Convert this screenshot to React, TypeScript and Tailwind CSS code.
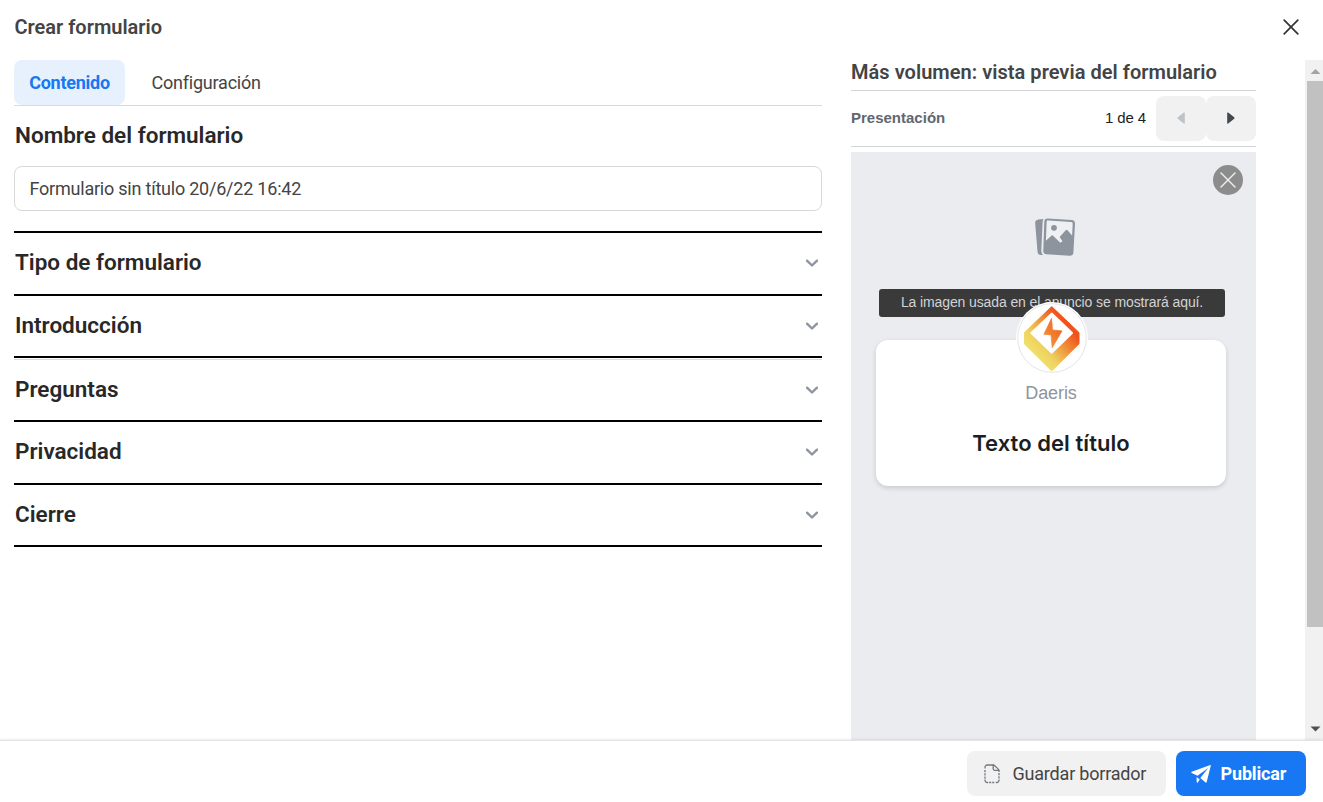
import React from "react";

const sections = [
  { title: "Tipo de formulario", box: "h-[63px] pb-px" },
  { title: "Introducción", box: "h-[62px]" },
  { title: "Preguntas", box: "h-[64px] pt-px shadow-[inset_0_1px_0_#fff,inset_0_2px_0_#dadada]" },
  { title: "Privacidad", box: "h-[63px] pb-px" },
  { title: "Cierre", box: "h-[62px]" },
];

function Chevron() {
  return (
    <svg className="mr-1 h-3 w-3" viewBox="0 0 12 12" fill="none" stroke="#8d949e" strokeWidth="2.4" strokeLinecap="round" strokeLinejoin="round">
      <path d="M1 3.700 6 8.500l5-4.800" />
    </svg>
  );
}

function PhotosIcon() {
  return (
    <svg className="h-[40px] w-[42px]" viewBox="0 0 42 40" fill="#8d949e">
      <path d="M7.2 2.2 4.4 2.5A3.6 3.6 0 0 0 1.200 6.400L3.500 34.500A3.800 3.800 0 0 0 7.400 38L9 37.900A5 5 0 0 1 7.300 33.500L8.600 5Q8.700 3.300 9.600 2.100Z" />
      <path d="M13.800 1.400 37.500 3A3.700 3.700 0 0 1 41 7L39.400 35.400A3.700 3.700 0 0 1 35.400 38.800L12.500 37.300A3.500 3.500 0 0 1 9.300 33.500L10.300 4.600A3.400 3.400 0 0 1 13.800 1.400Z" />
      <path fill="#eef0f3" d="M14.700 3.400 37.100 4.900A1.700 1.700 0 0 1 38.700 6.800L38.100 18.400 33.700 13.400A1.500 1.500 0 0 0 31.500 13.400L25.600 20 28.500 24.200 26.300 25.800 19.300 18.900A1.500 1.500 0 0 0 17.100 18.900L11.900 23.700 12.600 5.100A1.700 1.700 0 0 1 14.700 3.400Z" />
      <circle cx="20" cy="10.800" r="2.900" />
    </svg>
  );
}

function BrandLogo() {
  return (
    <svg className="h-[72px] w-[72px]" viewBox="0 0 72 72">
      <defs>
        <linearGradient id="brand" gradientUnits="userSpaceOnUse" x1="17" y1="50" x2="50" y2="22">
          <stop offset="0" stopColor="#efdf68" />
          <stop offset="0.25" stopColor="#efd160" />
          <stop offset="0.55" stopColor="#ef9f42" />
          <stop offset="1" stopColor="#f0541c" />
        </linearGradient>
        <linearGradient id="bolt" gradientUnits="userSpaceOnUse" x1="26" y1="40" x2="48" y2="25">
          <stop offset="0" stopColor="#f19a40" />
          <stop offset="1" stopColor="#f0601f" />
        </linearGradient>
      </defs>
      <circle cx="36" cy="36" r="36" fill="#fff" />
      <circle cx="36" cy="36" r="34.300" fill="#fff" stroke="#e4e5e8" strokeWidth="1" />
      <path d="M35.200 5Q35.700 4.500 36.200 5L63 30.500V41.800L36.400 68.300Q35.700 69 35 68.300L8.500 42V30.500Z" fill="url(#brand)" stroke="url(#brand)" strokeWidth="1" strokeLinejoin="round" />
      <path d="M35 11Q35.800 10.200 36.600 11L56.700 30.200Q57.500 31 56.700 31.800L36.500 51.200Q35.700 52 34.900 51.200L14.700 31.800Q14 31 14.700 30.200Z" fill="#fff" />
      <path d="M35.500 16.500 27.800 32.300 35 32.900 36.200 45.800 46 28.900 36.500 27.900Z" fill="url(#bolt)" stroke="url(#bolt)" strokeWidth="0.700" strokeLinejoin="round" />
    </svg>
  );
}

function DraftIcon() {
  return (
    <svg className="h-[20px] w-[16px]" viewBox="0 0 16 20" fill="none" stroke="#737880" strokeWidth="1.300">
      <path d="M9.500 1H3.200A2.200 2.200 0 0 0 1 3.200V4.500" />
      <path d="M1 6v9" strokeDasharray="2.300 0.900" />
      <path d="M1 15.500v.8A2.200 2.200 0 0 0 3.200 18.500h1" />
      <path d="M5.200 18.500h6" strokeDasharray="2 1" />
      <path d="M11.800 18.500h1A2.200 2.200 0 0 0 15 16.300v-.8" />
      <path d="M15 14.500V7" strokeDasharray="2.300 0.900" />
      <path d="M9.200 1v3.800A1.500 1.500 0 0 0 10.700 6.300H15Q14.700 5.500 13.800 4.600L11.300 2.200Q10.400 1.200 9.200 1Z" />
    </svg>
  );
}

export default function App() {
  return (
    <div className="flex h-[802px] w-[1323px] flex-col overflow-hidden bg-white font-['Roboto',sans-serif] text-[#1c1e21]">
      <header className="flex h-[60px] shrink-0 items-start justify-between pl-[14.500px] pr-6 pt-[15px]">
        <h1 className="text-[20px] font-semibold leading-6 text-[#444444]">Crear formulario</h1>
        <svg className="mt-1 h-4 w-4" viewBox="0 0 16 16" stroke="#333" strokeWidth="1.700" strokeLinecap="round">
          <path d="M1.200 1.200 14.800 14.800M14.800 1.200 1.200 14.800" />
        </svg>
      </header>

      <div className="flex h-[680px] shrink-0">
        <main className="ml-[14px] w-[808px]">
          <nav className="flex h-[46px] items-start border-b border-[#dadada]">
            <button className="h-[45px] w-[111px] rounded-lg bg-[#e7f1fe] text-[18px] font-bold tracking-[-0.250px] text-[#1877f2]">Contenido</button>
            <button className="ml-[26.500px] h-[45px] text-[18px] font-normal tracking-[-0.220px] text-[#444]">Configuración</button>
          </nav>
          <h2 className="mt-[15px] h-7 pl-px text-[22.500px] font-semibold leading-7 text-[#282828]">Nombre del formulario</h2>
          <div className="mt-[17px] flex h-[45px] items-center rounded-lg border border-[#d8d8d8] pl-[14.500px] text-[18px] font-normal tracking-[-0.220px] text-[#444]">
            Formulario sin título 20/6/22 16:42
          </div>
          <div className="mt-5 border-t-2 border-black">
            {sections.map((s) => (
              <div key={s.title} className={"flex items-center justify-between border-b-2 border-black pl-px " + s.box}>
                <h2 className="pb-[2px] text-[22.500px] font-semibold leading-7 text-[#282828]">{s.title}</h2>
                <Chevron />
              </div>
            ))}
          </div>
        </main>

        <aside className="ml-[29px] flex w-[405px] flex-col">
          <h2 className="h-[31px] border-b border-[#d4d5d7] text-[20px] font-semibold leading-6 tracking-[0.035px] text-[#444444]">
            Más volumen: vista previa del formulario
          </h2>
          <div className="flex h-14 items-center border-b border-[#d4d5d7] font-['Liberation_Sans',sans-serif] text-[15px]">
            <span className="font-bold text-[#606770]">Presentación</span>
            <span className="ml-auto mr-[10px] tracking-[-0.100px]">1 de 4</span>
            <button className="flex h-[45px] w-[50px] items-center justify-center rounded-lg bg-[#f1f1f1] pb-px">
              <svg className="h-3 w-2" viewBox="0 0 8 12" fill="#bec3c9"><path d="M7.800 1v10Q7.800 12 6.800 11.400L.8 6.700Q.1 6 .8 5.300L6.800.6Q7.800 0 7.800 1Z" /></svg>
            </button>
            <button className="flex h-[45px] w-[50px] items-center justify-center rounded-lg bg-[#f1f1f1] pb-px">
              <svg className="h-3 w-2" viewBox="0 0 8 12" fill="#444950"><path d="M.2 1v10Q.2 12 1.200 11.400L7.200 6.700Q7.900 6 7.200 5.300L1.200.6Q.2 0 .2 1Z" /></svg>
            </button>
          </div>
          <div className="mt-[5px] flex grow flex-col bg-[#ebecf0] font-['Liberation_Sans',sans-serif]">
            <div className="flex h-[65px] justify-end pr-[13px] pt-[13px]">
              <div className="flex h-[30px] w-[30px] items-center justify-center rounded-full bg-[#8c8c8c]">
                <svg className="h-4 w-4" viewBox="0 0 16 16" stroke="#f1f1f1" strokeWidth="1.400" strokeLinecap="round"><path d="M1 1 15 15M15 1 1 15" /></svg>
              </div>
            </div>
            <div className="flex h-[72px] pl-[183px]"><PhotosIcon /></div>
            <div className="ml-7 flex h-7 w-[346px] items-center justify-center rounded-[3px] bg-[#3a3a3a] pb-px text-[14px] tracking-[-0.110px] text-[#d2d3d5]">
              La imagen usada en el anuncio se mostrará aquí.
            </div>
            <div className="relative ml-[25px] mt-[23px] h-[146px] w-[350px] rounded-xl bg-white pt-[42px] text-center shadow-[0_2px_5px_rgba(0,0,0,0.15)]">
              <div className="absolute -top-[38px] left-[140px]"><BrandLogo /></div>
              <p className="text-[18px] leading-[22px] tracking-[-0.100px] text-[#90949c]">Daeris</p>
              <h3 className="mt-[25px] text-[22px] font-semibold leading-7 tracking-[0.060px] text-[#1c1e21] font-['Inter',sans-serif]">Texto del título</h3>
            </div>
          </div>
        </aside>

        <div className="ml-auto flex w-[18px] flex-col items-center bg-[#f1f1f1]">
          <svg className="h-[21px] w-[18px]" viewBox="0 0 18 21" fill="#a3a3a3"><path d="M5.500 14 10.500 9l5 5Z" /></svg>
          <div className="ml-[2px] h-[546px] w-4 bg-[#c1c1c1]" />
          <svg className="mt-auto h-[21px] w-[18px]" viewBox="0 0 18 21" fill="#505050"><path d="M5.500 7.500h10l-5 5Z" /></svg>
        </div>
      </div>

      <footer className="relative flex h-[62px] shrink-0 items-start justify-end gap-[10px] border-t border-[#e4e4e4] bg-white pr-[17px] pt-[10px] shadow-[0_-1px_2px_rgba(0,0,0,0.08)]">
        <button className="flex h-[45px] w-[199px] items-center rounded-lg bg-[#f1f1f1] pl-[17px] text-[18px] font-normal text-[#444]">
          <DraftIcon />
          <span className="ml-[12.500px] tracking-[-0.200px]">Guardar borrador</span>
        </button>
        <button className="flex h-[45px] w-[130px] items-center rounded-lg bg-[#1877f2] pl-[15px] text-[18px] font-bold text-white">
          <svg className="h-5 w-5" viewBox="0 0 20 20" fill="#fff">
            <path d="M19.300 1.100Q20 .9 19.800 1.700L15.700 18Q15.400 19 14.600 18.400L9.300 14 17.200 4 6.500 11.800.7 9Q-.3 8.200.7 7.700Z" />
            <path d="M5.600 13 8.800 15.500 6.800 18.400Q6 19 5.700 18Z" />
          </svg>
          <span className="ml-[9.500px] tracking-[-0.150px]">Publicar</span>
        </button>
      </footer>
    </div>
  );
}
